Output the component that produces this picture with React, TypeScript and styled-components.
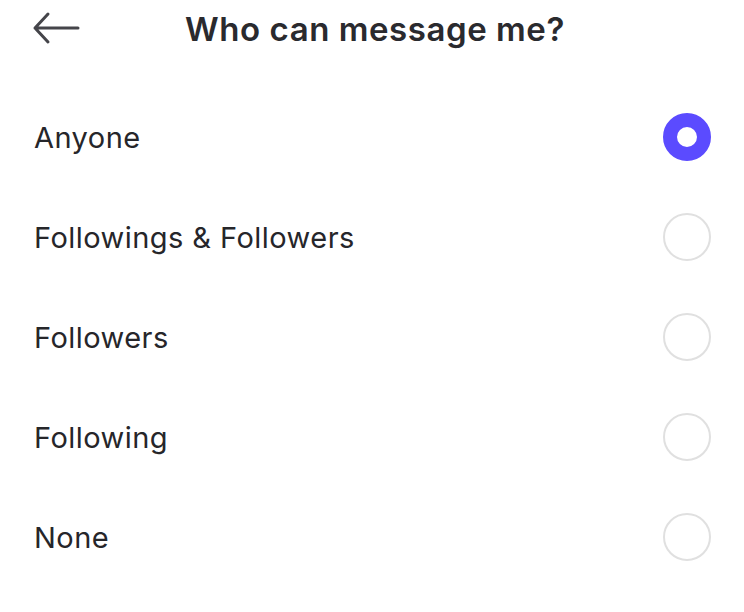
import React, { useState } from "react";
import styled, { createGlobalStyle } from "styled-components";

const Global = createGlobalStyle`
  html, body { margin: 0; padding: 0; background: #fff; }
  body { font-family: Inter, "Noto Sans", sans-serif; -webkit-font-smoothing: antialiased; }
`;

const Page = styled.div`
  width: 744px;
  height: 612px;
  background: #fff;
  display: flex;
  flex-direction: column;
`;

const Header = styled.header`
  height: 58px;
  position: relative;
  display: flex;
  align-items: center;
  justify-content: center;
`;

const BackButton = styled.button`
  position: absolute;
  left: 32px;
  top: 10px;
  width: 50px;
  height: 36px;
  padding: 0;
  border: none;
  background: none;
  display: flex;
  align-items: center;
  cursor: pointer;
`;

const Title = styled.h1`
  margin: 0 0 0 6px;
  font-size: 33px;
  font-weight: 600;
  color: #2a2a2e;
  letter-spacing: 0.55px;
`;

const List = styled.div`
  display: flex;
  flex-direction: column;
  padding-top: 29px;
`;

const Row = styled.label`
  height: 100px;
  display: flex;
  align-items: center;
  justify-content: space-between;
  padding: 0 33px 0 34px;
  cursor: pointer;
`;

const Label = styled.span`
  font-size: 29px;
  color: #26262a;
  letter-spacing: 0.45px;
`;

const Radio = styled.span<{ $checked: boolean }>`
  width: 48px;
  height: 48px;
  box-sizing: border-box;
  border-radius: 50%;
  border: ${(p) => (p.$checked ? "14px solid #5b4bff" : "2px solid #e0e0e0")};
  background: #fff;
`;

const options = [
  "Anyone",
  "Followings & Followers",
  "Followers",
  "Following",
  "None",
];

export default function App() {
  const [sel, setSel] = useState(0);
  return (
    <Page>
      <Global />
      <Header>
        <BackButton aria-label="Back">
          <svg width="50" height="36" viewBox="0 0 50 36" fill="none">
            <path
              d="M46 18H3M16 4L3 18L16 32"
              stroke="#45454a"
              strokeWidth="3"
              strokeLinecap="round"
              strokeLinejoin="round"
            />
          </svg>
        </BackButton>
        <Title>Who can message me?</Title>
      </Header>
      <List>
        {options.map((o, i) => (
          <Row key={o} onClick={() => setSel(i)}>
            <Label>{o}</Label>
            <Radio $checked={sel === i} />
          </Row>
        ))}
      </List>
    </Page>
  );
}
